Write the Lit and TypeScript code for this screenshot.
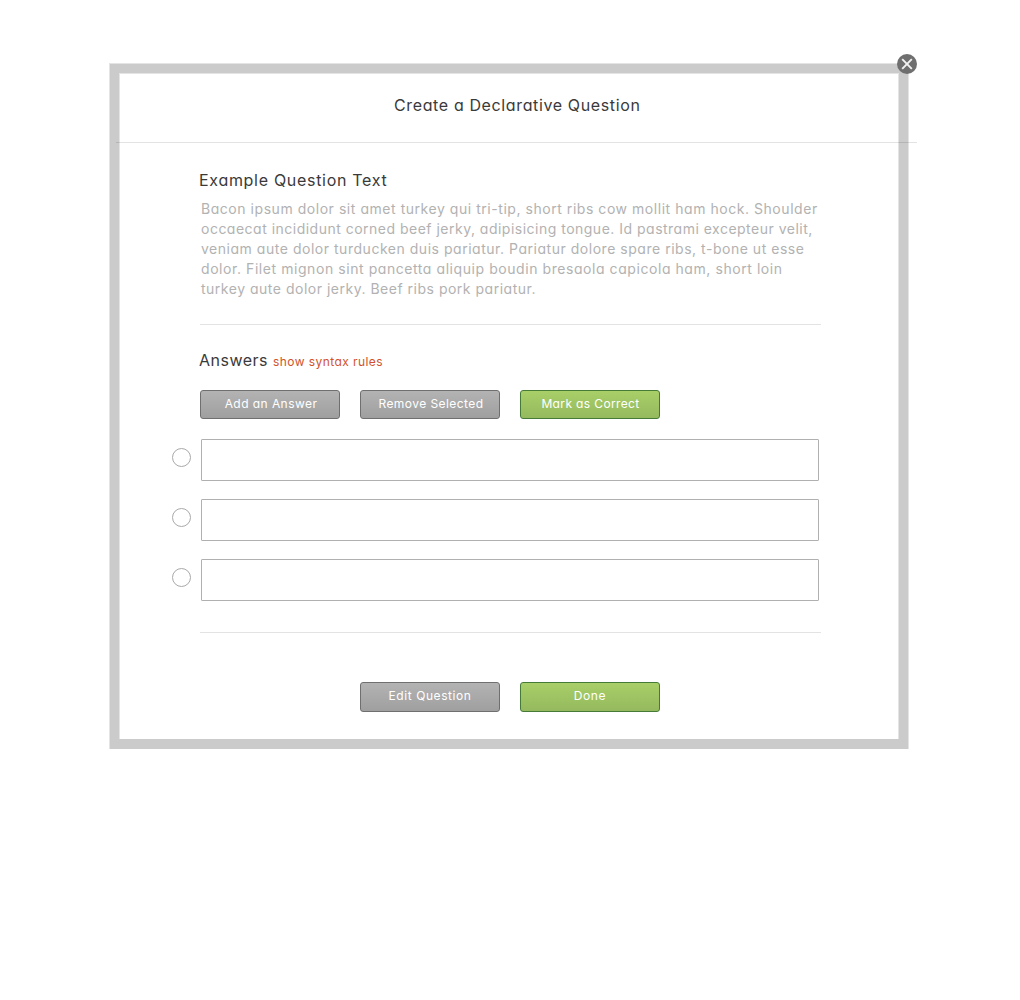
import { LitElement, html, css } from "lit";
import { customElement } from "lit/decorators.js";

interface Line {
  text: string;
  tracking: number;
}

const QUESTION_LINES: Line[] = [
  { text: "Bacon ipsum dolor sit amet turkey qui tri-tip, short ribs cow mollit ham hock. Shoulder", tracking: 0.544 },
  { text: "occaecat incididunt corned beef jerky, adipisicing tongue. Id pastrami excepteur velit,", tracking: 0.492 },
  { text: "veniam aute dolor turducken duis pariatur. Pariatur dolore spare ribs, t-bone ut esse", tracking: 0.526 },
  { text: "dolor. Filet mignon sint pancetta aliquip boudin bresaola capicola ham, short loin", tracking: 0.565 },
  { text: "turkey aute dolor jerky. Beef ribs pork pariatur.", tracking: 0.508 },
];

@customElement("app-root")
export class AppRoot extends LitElement {
  static styles = css`
    :host {
      display: block;
      height: 1000px;
      box-sizing: border-box;
      padding: 63px 0 0 109px;
      background: #fff;
      overflow: hidden;
      color: #3a3a3a;
      font-family: Inter, "Open Sans", sans-serif;
      font-feature-settings: "cv11";
    }
    * { box-sizing: border-box; }
    h1, h2, p { margin: 0; font-weight: 400; white-space: nowrap; }
    .frame {
      position: relative;
      width: 800px;
      height: 686px;
      padding: 9px 9px 10px;
      background: #cbcbcb;
      border: 1px solid #e4e4e4;
      border-bottom: 0;
    }
    .dialog {
      height: 100%;
      background: #fff;
      border: 1px solid #e4e4e4;
      border-bottom: 0;
      display: flex;
      flex-direction: column;
    }
    .header { height: 68px; padding: 21px 0 0 274px; }
    .title, .heading { font-size: 16px; line-height: 20px; }
    .title { letter-spacing: 0.63px; }
    .heading { letter-spacing: 0.7px; margin-left: -1px; }
    .rule {
      position: absolute;
      left: 6px;
      top: 78px;
      width: 801px;
      height: 1px;
      background: rgba(0, 0, 0, 0.11);
    }
    .close {
      position: absolute;
      left: 786px;
      top: -11px;
      width: 22px;
      height: 22px;
      padding: 0;
      border: 0;
      background: none;
    }
    .close svg { display: block; }
    .body { padding: 28px 0 0 80px; width: 701px; }
    .question { padding: 9px 0 0 1px; font-size: 14px; line-height: 20px; color: #b2b2b2; }
    .line { display: block; width: max-content; }
    .divider { height: 1px; background: #e3e3e3; }
    .question + .divider { margin-top: 25px; }
    .answers-head { display: flex; align-items: baseline; gap: 5px; margin-top: 25px; height: 20px; }
    .answers-head .heading { letter-spacing: 0.5px; }
    .link { color: #d2522b; font-size: 12px; line-height: 16px; letter-spacing: 0.42px; }
    .row { display: flex; gap: 20px; margin-top: 20px; }
    .btn {
      width: 140px;
      height: 29px;
      padding: 0 0 2px;
      border: 1px solid #6f6f6f;
      border-radius: 3px;
      background: linear-gradient(#b3b3b3, #9f9f9f);
      color: #fff;
      font: inherit;
      font-size: 12px;
      letter-spacing: 0.58px;
      white-space: nowrap;
      display: flex;
      justify-content: center;
      align-items: center;
    }
    .row .btn { padding-left: 2px; letter-spacing: 0.44px; }
    .row .green { letter-spacing: 0.37px; padding-left: 1px; }
    .green { border-color: #457b36; background: linear-gradient(#a8cf68, #95b95e); }
    .answers { display: grid; gap: 18px; margin: 20px 0 31px -28px; }
    .answer { display: flex; gap: 10px; height: 42px; }
    .radio { width: 19px; height: 19px; margin-top: 9px; border: 1px solid #a9a9a9; border-radius: 50%; }
    .field { width: 618px; height: 42px; border: 1px solid #b0b0b0; border-radius: 1px; }
    .footer { display: flex; gap: 20px; margin: 49px 0 0 160px; }
    .footer .btn { height: 30px; padding-bottom: 3px; }
  `;

  render() {
    return html`
      <section class="frame">
        <div class="dialog">
          <div class="header"><h1 class="title">Create a Declarative Question</h1></div>
          <div class="body">
            <h2 class="heading">Example Question Text</h2>
            <p class="question">
              ${QUESTION_LINES.map((l) => html`<span class="line" style="letter-spacing:${l.tracking}px">${l.text}</span>`)}
            </p>
            <div class="divider"></div>
            <div class="answers-head"><h2 class="heading">Answers</h2><span class="link">show syntax rules</span></div>
            <div class="row">
              <button class="btn">Add an Answer</button>
              <button class="btn">Remove Selected</button>
              <button class="btn green">Mark as Correct</button>
            </div>
            <div class="answers">
              ${[0, 1, 2].map(() => html`<div class="answer"><span class="radio"></span><div class="field"></div></div>`)}
            </div>
            <div class="divider"></div>
            <div class="footer">
              <button class="btn">Edit Question</button>
              <button class="btn green">Done</button>
            </div>
          </div>
        </div>
        <div class="rule"></div>
        <button class="close" aria-label="Close">
          <svg width="22" height="22" viewBox="0 0 22 22">
            <circle cx="11" cy="11" r="10" fill="#6f6f6f" />
            <path d="M6.2 6.2 L15.8 15.8 M15.8 6.2 L6.2 15.8" stroke="#f2f2f2" stroke-width="1.9" />
          </svg>
        </button>
      </section>
    `;
  }
}
